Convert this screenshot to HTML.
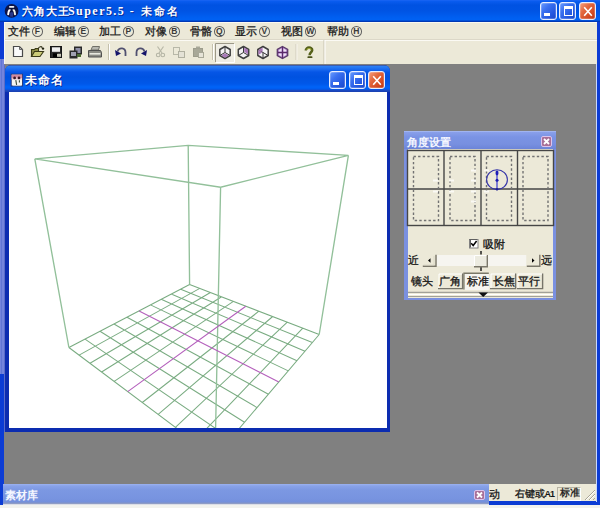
<!DOCTYPE html>
<html><head><meta charset="utf-8">
<style>
*{box-sizing:border-box;margin:0;padding:0}
html,body{width:600px;height:508px;overflow:hidden;background:#f2f2ee;font-family:"Liberation Sans",sans-serif;font-size:11px;color:#000}
.a{position:absolute}
.tb{border:1px solid #e8eeff;border-radius:3px;overflow:hidden;box-shadow:inset 0 0 0 0.5px rgba(255,255,255,.4)}
.mi{top:4px;line-height:12px;white-space:nowrap;font-size:10.6px;color:#1a1a1a;-webkit-text-stroke:0.3px #1a1a1a}
.mi u{text-decoration:none;display:inline-block;position:relative;width:11.5px;height:11px;border:1.2px solid #606060;border-left-width:1.5px;border-right-width:1.5px;border-radius:50%;margin-left:1.5px;vertical-align:1px;font-size:8.5px;line-height:8.5px;text-align:center;font-weight:bold;-webkit-text-stroke:0;color:#3a3a3a}
.pt{font-size:10.6px;line-height:12px;white-space:nowrap;color:#161616;-webkit-text-stroke:0.3px #161616}
.wt{color:#fff;font-weight:bold;white-space:nowrap}
</style></head><body>
<!-- main frame -->
<div class="a" style="left:0;top:0;width:600px;height:505px;background:#0c3cd4"></div>
<div class="a" style="left:0;top:59px;width:4px;height:315px;background:#7484dc"></div>
<div class="a" style="left:1px;top:59px;width:1px;height:315px;background:#6076d4"></div>
<div class="a" style="left:596px;top:22px;width:1px;height:480px;background:#c8d8ff"></div>
<!-- title -->
<div class="a" style="left:0;top:0;width:600px;height:22px;background:linear-gradient(#2068f4 0px,#0a5cf0 1px,#0052e2 5px,#0054e4 11px,#005ef0 17px,#0062f4 20px,#0040c0 21px,#0030a8 22px)"></div>
<svg class="a" style="left:0;top:0" width="22" height="22"><circle cx="11.6" cy="10.9" r="6.9" fill="#0c1448"/><path d="M10 13Q11.6 11 13.2 13L13 16.8H10.2Z" fill="#28388c"/><path d="M9.8 6.9H13.5" stroke="#f0f4f8" stroke-width="1.6" stroke-linecap="round"/><path d="M9.7 9.8Q8.2 11.4 8.2 14.2" stroke="#fff" stroke-width="2" stroke-linecap="round" fill="none"/><path d="M13.5 9.8Q15 11.4 15 14.2" stroke="#f4f4ec" stroke-width="2" stroke-linecap="round" fill="none"/><path d="M8.5 8.8H14.7" stroke="#080c30" stroke-width="1"/></svg>
<div class="a wt" style="left:21.5px;top:4px;font-size:10.8px;letter-spacing:1.25px;line-height:14px;text-shadow:1px 1px 0 #0a2c98">六角大王<span style="font-family:'Liberation Serif',serif;font-size:12px;letter-spacing:1.45px;margin-left:-2.5px">Super5.5 - </span><span style="margin-left:1.5px;letter-spacing:2.1px">未命名</span></div>
<div class="a tb" style="left:540px;top:2px;width:17px;height:18px;background:linear-gradient(135deg,#6a9cff 0%,#3a70f0 35%,#2458e0 70%,#1c48c8 100%)"><div class="a" style="left:3px;bottom:3px;width:6px;height:2.6px;background:#fff"></div></div><div class="a tb" style="left:559px;top:2px;width:17px;height:18px;background:linear-gradient(135deg,#6a9cff 0%,#3a70f0 35%,#2458e0 70%,#1c48c8 100%)"><div class="a" style="left:3.5px;top:3px;width:9.5px;height:9.5px;border:1px solid #fff;border-top:3px solid #fff"></div></div><div class="a tb" style="left:579px;top:2px;width:17px;height:18px;background:linear-gradient(135deg,#f4a080 0%,#e46a40 35%,#d44c24 70%,#b83818 100%)"><svg class="a" style="left:0;top:0" width="17" height="18"><path d="M4.2 4.2L11.8 12.8M11.8 4.2L4.2 12.8" stroke="#fff" stroke-width="1.6"/></svg></div>
<!-- menu -->
<div class="a" style="left:4px;top:22px;width:593px;height:18px;background:#ece9d8;border-top:1px solid #faf8f0"></div>
<div class="a" style="left:4px;top:39px;width:593px;height:1px;background:#dcd8c8"></div>
<div class="a mi" style="left:8px;top:25px">文件<u>F</u></div>
<div class="a mi" style="left:54px;top:25px">编辑<u>E</u></div>
<div class="a mi" style="left:99px;top:25px">加工<u>P</u></div>
<div class="a mi" style="left:145px;top:25px">对像<u>B</u></div>
<div class="a mi" style="left:190px;top:25px">骨骼<u>Q</u></div>
<div class="a mi" style="left:235px;top:25px">显示<u>V</u></div>
<div class="a mi" style="left:281px;top:25px">视图<u>W</u></div>
<div class="a mi" style="left:327px;top:25px">帮助<u>H</u></div>
<!-- toolbar -->
<div class="a" style="left:4px;top:40px;width:593px;height:24px;background:#ece9d8;border-top:1px solid #fbfaf4"></div>
<svg class="a" style="left:0;top:0" width="330" height="64" viewBox="0 0 330 64">
 <!-- new doc -->
 <path d="M13.5 46.5H19.5L22.5 49.5V56.5H13.5Z" fill="#fafafa" stroke="#4a4a4a" stroke-width="1.2"/>
 <path d="M19.5 46.5V49.5H22.5" fill="none" stroke="#6a6a6a" stroke-width="1"/>
 <!-- open folder -->
 <path d="M31.5 49.5H34.5L35.5 48.5H38.5V56.5H31.5Z" fill="#8c8c48" stroke="#3a3a18" stroke-width="1.1"/>
 <path d="M31.5 56.5L34.5 51.5H43.5L40 56.5Z" fill="#cccc78" stroke="#3a3a18" stroke-width="1.1"/>
 <path d="M38.5 48C39.5 46.3 41.5 46.3 42.3 47.6" fill="none" stroke="#303018" stroke-width="1.1"/>
 <circle cx="43" cy="48.6" r="1.2" fill="#202010"/>
 <!-- save -->
 <rect x="50.5" y="46.5" width="11" height="11" fill="#2a2a2a" stroke="#181818"/>
 <rect x="52" y="47.3" width="8" height="4.5" fill="#f0f0f0"/>
 <rect x="53" y="53.3" width="5" height="4" fill="#000"/>
 <rect x="57" y="53.8" width="4" height="3" fill="#c8c8b8"/>
 <!-- multi docs -->
 <rect x="74" y="46.5" width="8" height="8" fill="#2a2a2a"/>
 <rect x="75.5" y="48" width="5" height="5" fill="#9090a8"/>
 <rect x="69.5" y="50.5" width="8" height="8" fill="#2a2a2a"/>
 <rect x="71" y="52" width="5" height="4" fill="#a0a0b0"/>
 <rect x="77" y="54" width="4" height="3" fill="#4a6a30"/>
 <!-- printer -->
 <path d="M91 50L92.5 46.5H99.5L98.5 50Z" fill="#b8b8b0" stroke="#707068" stroke-width="1"/>
 <path d="M88.5 50.5H100.5L101.5 52.5V57H88.5Z" fill="#8a8a84" stroke="#505050" stroke-width="1"/>
 <rect x="89.5" y="53" width="11" height="1.6" fill="#e8e8e0"/>
 <!-- sep -->
 <rect x="108" y="44" width="1" height="16" fill="#c4c0ac"/><rect x="109" y="44" width="1" height="16" fill="#fff"/>
 <!-- undo -->
 <path d="M125.5 56V52.5C125.5 47.5 119 47 117.5 51.5" fill="none" stroke="#505070" stroke-width="1.8"/>
 <path d="M115 50L116 56L121 53.5Z" fill="#14146a"/>
 <!-- redo -->
 <path d="M136.5 56V52.5C136.5 47.5 143 47 144.5 51.5" fill="none" stroke="#505070" stroke-width="1.8"/>
 <path d="M147 50L146 56L141 53.5Z" fill="#14146a"/>
 <!-- cut (disabled) -->
 <path d="M157.5 46.5L162 53M163.5 46.5L159 53" stroke="#b8b8a8" stroke-width="1.2" fill="none"/>
 <circle cx="158.2" cy="55" r="1.8" fill="none" stroke="#b4b4a4" stroke-width="1.1"/>
 <circle cx="162.8" cy="55" r="1.8" fill="none" stroke="#b4b4a4" stroke-width="1.1"/>
 <!-- copy (disabled) -->
 <rect x="173.5" y="47.5" width="6" height="7" fill="none" stroke="#b8b8a8"/>
 <rect x="178.5" y="51.5" width="6" height="6" fill="#e4e2d6" stroke="#b0b0a0"/>
 <!-- paste (disabled) -->
 <rect x="193.5" y="48.5" width="9" height="8" fill="#a8a898" stroke="#9c9c8c"/>
 <rect x="196" y="46.5" width="4" height="2" fill="#a8a898"/>
 <rect x="198.5" y="52.5" width="5" height="5" fill="#e6e4d8" stroke="#a8a898"/>
 <!-- sep -->
 <rect x="212" y="44" width="1" height="16" fill="#c4c0ac"/><rect x="213" y="44" width="1" height="16" fill="#fff"/>
 <!-- pressed button -->
 <rect x="215.5" y="43.5" width="19" height="19" fill="#efede4" stroke="none"/>
 <path d="M215.5 62V43.5H234" fill="none" stroke="#9c9888" stroke-width="1"/>
 <path d="M216 62.5H234.5V44" fill="none" stroke="#ffffff" stroke-width="1"/>
 <!-- hexes -->
 <g stroke="#404040" stroke-width="1.5" fill="#f4f2f4" stroke-linejoin="round">
  <path d="M225 46.5L230.2 49.5V55.5L225 58.5L219.8 55.5V49.5Z"/>
  <path d="M243.5 46.5L248.7 49.5V55.5L243.5 58.5L238.3 55.5V49.5Z"/>
  <path d="M263 46.5L268.2 49.5V55.5L263 58.5L257.8 55.5V49.5Z"/>
 </g>
 <path d="M225 52.5V47M225 52.5L220.3 55.2M225 52.5L229.7 55.2" stroke="#383838" stroke-width="1"/>
 <path d="M221.3 55.4L225 53.3L228.7 55.4L225 57.8Z" fill="#a878b8"/>
 <path d="M243.5 52.5V47M243.5 52.5L238.8 55.2M243.5 52.5L248.2 55.2" stroke="#383838" stroke-width="1"/>
 <path d="M244.2 51.8V47.6L248 49.8V54.2Z" fill="#a878b8"/>
 <path d="M263 52.5L258.3 49.8M263 52.5L263 58M263 52.5L267.7 55.2" stroke="#383838" stroke-width="1"/>
 <path d="M262.6 51.8V47.4L258.4 49.9L258.4 50.4Z M258.4 50.6L262.3 52.6L258.4 54.8Z" fill="#a878b8"/>
 <path d="M282.5 46.5L287.7 49.5V55.5L282.5 58.5L277.3 55.5V49.5Z" fill="#b890d0" stroke="#5a3a6a" stroke-width="1.3"/>
 <path d="M282.5 47V58M277.8 52.5H287.2" stroke="#5a2a6a" stroke-width="1.3"/>
 <path d="M279 50L281.5 48.5V51.5H279Z M283.5 48.5L286 50V51.5H283.5Z M279 53.5H281.5V56.5L279 55Z M283.5 53.5H286V55L283.5 56.5Z" fill="#f0e4f4"/>
 <!-- sep -->
 <rect x="295.5" y="44" width="1" height="16" fill="#d0ccbc"/><rect x="296.5" y="44" width="1" height="16" fill="#f8f6ee"/>
 <!-- help -->
 <path d="M305.8 50.5C305.6 46.8 312.4 46.6 312.2 50.2C312 52.3 309.6 52.6 309.6 55.2" fill="none" stroke="#55601a" stroke-width="2.5"/>
 <path d="M307 50C307.2 48.2 310.8 48 311 50" fill="none" stroke="#a8b440" stroke-width="1.1"/>
 <path d="M308.3 57.2H311.6" stroke="#48521a" stroke-width="1.8" stroke-linecap="round"/>
 <!-- toolbar end -->
 <rect x="323.5" y="40" width="1" height="24" fill="#c8c4b0"/><rect x="324.5" y="40" width="1" height="24" fill="#fff"/>
</svg>

<div class="a" style="left:4px;top:22px;width:1px;height:42px;background:#f6f6f2"></div>
<!-- mdi -->
<div class="a" style="left:4px;top:64px;width:592px;height:420px;background:#808080"></div>
<div class="a" style="left:4px;top:65px;width:1px;height:367px;background:#5a6cc8"></div>
<!-- child -->
<div class="a" style="left:5px;top:65px;width:385px;height:367px;background:#0c2cb0;border-radius:6px 6px 0 0"></div>
<div class="a" style="left:5px;top:65px;width:385px;height:27px;border-radius:6px 6px 0 0;background:linear-gradient(#3a5cb0 0px,#3a5cb0 1px,#2a7ef4 1.5px,#1c6cf0 4px,#0656e6 7px,#0052e0 12px,#0058ea 19px,#0064f8 22px,#005cf0 24px,#1a48c0 25.5px,#1a40b0 27px)"></div>
<svg class="a" style="left:10px;top:73px" width="14" height="14"><rect x="1.2" y="1.2" width="11.3" height="11.8" fill="#f6f6f2" stroke="#203070" stroke-width="0.9"/><rect x="1.6" y="1.6" width="10.5" height="3.6" fill="#d48aa0"/><path d="M1.6 5.2Q6.8 3.2 12.1 5.2V6.4H1.6Z" fill="#e8c0cc"/><circle cx="4.6" cy="4.9" r="1.4" fill="#3a1626"/><circle cx="9" cy="4.9" r="1.4" fill="#3a1626"/><path d="M5.8 7.2L6.6 11.8M9.4 7.2V9.5" stroke="#384838" stroke-width="1.1"/><path d="M3 12.6H11" stroke="#c8d0d8" stroke-width="0.8"/></svg>
<div class="a wt" style="left:24.5px;top:73px;font-size:11.6px;letter-spacing:1.3px;line-height:14px;text-shadow:1px 1px 0 #0a2c98">未命名</div>
<div class="a tb" style="left:329px;top:71px;width:17px;height:18px;background:linear-gradient(135deg,#6a9cff 0%,#3a70f0 35%,#2458e0 70%,#1c48c8 100%)"><div class="a" style="left:3px;bottom:3px;width:6px;height:2.6px;background:#fff"></div></div><div class="a tb" style="left:349px;top:71px;width:17px;height:18px;background:linear-gradient(135deg,#6a9cff 0%,#3a70f0 35%,#2458e0 70%,#1c48c8 100%)"><div class="a" style="left:3.5px;top:3px;width:9.5px;height:9.5px;border:1px solid #fff;border-top:3px solid #fff"></div></div><div class="a tb" style="left:368px;top:71px;width:17px;height:18px;background:linear-gradient(135deg,#f4a080 0%,#e46a40 35%,#d44c24 70%,#b83818 100%)"><svg class="a" style="left:0;top:0" width="17" height="18"><path d="M4.2 4.2L11.8 12.8M11.8 4.2L4.2 12.8" stroke="#fff" stroke-width="1.6"/></svg></div>
<div class="a" style="left:9px;top:92px;width:378px;height:336px;background:#fff;overflow:hidden">
<svg class="a" style="left:0;top:0" width="378" height="336" viewBox="9 92 378 336">
 <g fill="none" stroke="#7aac82" stroke-width="1.05">
  <path d="M189.6 284.5L68.9 347.5M189.6 284.5L319.2 334.5M199.8 288.4L79.1 355.1M180.7 289.2L312.3 342.6M210.4 292.5L90.0 363.3M171.2 294.1L305.0 351.2M221.6 296.8L101.6 372.0M161.2 299.3L297.0 360.7M233.4 301.4L114.2 381.4M150.5 304.9L288.3 370.9M258.9 311.2L142.3 402.5M127.0 317.2L268.4 394.2M272.7 316.5L158.2 414.4M114.0 324.0L257.1 407.6M287.3 322.2L175.4 427.4M100.0 331.3L244.5 422.3M302.8 328.2L194.3 441.5M85.0 339.1L230.6 438.7M319.2 334.5L215.0 457.0M68.9 347.5L215.0 457.0"/>
  <path d="M34.8 158.9L188.2 145.4L348.4 155.4L220.6 187.2Z M34.8 158.9L68.9 347.5 M188.2 145.4L189.6 284.5 M348.4 155.4L319.2 334.5 M220.6 187.2L215.0 457.0" stroke="#92c09a" stroke-width="1.35"/>
 </g>
 <path fill="none" stroke="#b460bc" stroke-width="1.1" d="M245.8 306.2L127.7 391.6M139.1 310.9L278.8 382.0"/>
</svg>
</div>
<!-- floating panel -->
<div class="a" style="left:404px;top:131px;width:152px;height:169px;background:#7a90e0;border-top:1px solid #a0b4f0"></div>
<div class="a" style="left:404px;top:132px;width:152px;height:17px;background:linear-gradient(#8aa0ea,#7a93e4 5px,#7890e0 12px,#6c84d8 17px)"></div>
<div class="a wt" style="left:407px;top:136px;font-size:11px;line-height:12px;color:#f4f6ff">角度设置</div>
<div class="a" style="left:541px;top:136px;width:11px;height:11px;background:#a87098;border:1px solid #dcc4ec;border-radius:2px"></div>
<svg class="a" style="left:541px;top:136px" width="11" height="11"><path d="M3 3L8 8M8 3L3 8" stroke="#fff" stroke-width="1.8"/></svg>
<div class="a" style="left:408px;top:149px;width:145px;height:149px;background:#ece9d8"></div>
<svg class="a" style="left:404px;top:131px" width="152" height="169" viewBox="404 131 152 169">
 <!-- grid bg -->
 <rect x="407.5" y="150.5" width="146" height="75" fill="#ece9d8" stroke="#464646" stroke-width="1.4"/>
 <path d="M444 150.5V225.5M481 150.5V225.5M517.5 150.5V225.5M407.5 189H553.5" stroke="#464646" stroke-width="1.4"/>
 <g fill="none" stroke="#727272" stroke-width="1.4" stroke-dasharray="2.4 2.2">
  <rect x="413.5" y="156.5" width="25" height="64"/>
  <rect x="450" y="156.5" width="25" height="64"/>
  <rect x="486.5" y="156.5" width="25" height="64"/>
  <rect x="523" y="156.5" width="25" height="64"/>
 </g>
 <!-- faint marks -->
 <g fill="#faf9f4"><rect x="433.0" y="179.5" width="5" height="2"/><rect x="433.0" y="190.5" width="5" height="2"/><rect x="449.0" y="179.5" width="5" height="2"/><rect x="449.0" y="190.5" width="5" height="2"/><rect x="471.0" y="169.5" width="5" height="2"/><rect x="471.0" y="179.5" width="5" height="2"/><rect x="471.0" y="190.5" width="5" height="2"/><rect x="471.0" y="200.5" width="5" height="2"/><rect x="484.0" y="169.5" width="5" height="2"/><rect x="484.0" y="190.5" width="5" height="2"/></g>
 <!-- blue circle -->
 <ellipse cx="497" cy="179.7" rx="10.4" ry="9.9" fill="none" stroke="#3434a8" stroke-width="1.1"/>
 <path d="M497 171V189.5" stroke="#3a3ad0" stroke-width="1.2"/>
 <ellipse cx="497" cy="173" rx="1.5" ry="2.4" fill="#1c1cb8"/>
 <circle cx="497" cy="180.3" r="1.5" fill="#1c1cb0"/>
 <circle cx="497" cy="189.2" r="1.2" fill="#202090"/>
 <!-- checkbox -->
 <rect x="469.5" y="239.5" width="8.5" height="8.5" fill="#fff" stroke="#808080" stroke-width="1"/>
 <path d="M470.5 239.5V247.5M469.5 239.5H477" stroke="#606060" stroke-width="1"/>
 <path d="M471.2 243.3L473.2 245.5L476.6 241" fill="none" stroke="#000" stroke-width="1.5"/>
 <!-- slider ticks -->
 <path d="M481 251V254.5M481 266.5V271" stroke="#202020" stroke-width="1.5"/>
 <!-- track -->
 <rect x="436.5" y="255" width="90" height="11" fill="#f6f5f0"/>
 <!-- left button -->
 <rect x="422.5" y="254.5" width="14" height="12" fill="#ece9d8"/>
 <path d="M436 254.8V266.2H422.8" fill="none" stroke="#7a776a" stroke-width="1.4"/>
 <path d="M434 256V265H423.5" fill="none" stroke="#d8d4c4" stroke-width="0.8"/>
 <path d="M428 260.5L430.5 258.2V262.8Z" fill="#000"/>
 <!-- right button -->
 <rect x="526.5" y="254.5" width="13.5" height="12" fill="#ece9d8"/>
 <path d="M539.8 254.8V266.2H526.8" fill="none" stroke="#7a776a" stroke-width="1.4"/>
 <path d="M534.5 260.5L532 258.2V262.8Z" fill="#000"/>
 <!-- thumb -->
 <rect x="474" y="255" width="13.5" height="12" fill="#ecebe0"/>
 <path d="M487.3 255V266.8H474" fill="none" stroke="#7a776a" stroke-width="1.4"/>
 <path d="M474.5 266V255.5H486.5" fill="none" stroke="#ffffff" stroke-width="1"/>
 <!-- tab buttons -->
 <g fill="none" stroke-width="1.4">
  <path d="M462.6 273.5V288.6H438" stroke="#76746a"/>
  <path d="M439 288V274H462" stroke="#ffffff" stroke-width="1"/>
  <path d="M488.8 273.3H464V289.5" stroke="#7a7868"/>
  <path d="M515.6 273.5V288.6H490" stroke="#76746a"/>
  <path d="M491 288V274H515" stroke="#ffffff" stroke-width="1"/>
  <path d="M542.6 273.5V288.6H517" stroke="#76746a"/>
  <path d="M518 288V274H542" stroke="#ffffff" stroke-width="1"/>
 </g>
 <rect x="464.8" y="274" width="24" height="16" fill="#f6f5f0"/>
 <!-- bottom rules -->
 <path d="M408 292.3H553M408 296.5H553" stroke="#a0a098" stroke-width="1.2"/>
 <path d="M408 294.5H553" stroke="#ffffff" stroke-width="1"/>
 <path d="M478.5 292.5H488L483.2 297Z" fill="#101010"/>
</svg>

<div class="a pt" style="left:483px;top:238px">吸附</div>
<div class="a pt" style="left:408px;top:254px">近</div>
<div class="a pt" style="left:541px;top:254px">远</div>
<div class="a pt" style="left:411px;top:274.5px">镜头</div>
<div class="a pt" style="left:439px;top:274.5px">广角</div>
<div class="a pt" style="left:467px;top:274.5px">标准</div>
<div class="a pt" style="left:493px;top:274.5px">长焦</div>
<div class="a pt" style="left:518px;top:274.5px">平行</div>
<!-- status bar -->
<div class="a" style="left:489px;top:484px;width:107px;height:17px;background:#ece9d8"></div>
<div class="a pt" style="left:489px;top:487.5px;font-size:10.5px">动</div>
<div class="a pt" style="left:515px;top:487.5px;font-size:10.2px">右键或<span style="font-family:'Liberation Sans';font-weight:bold;font-size:9px;letter-spacing:-0.9px;-webkit-text-stroke:0;margin-left:-0.5px">A1</span></div>
<div class="a" style="left:557px;top:487px;width:24px;height:14px;border-top:1px solid #b8b4a4;border-left:1px solid #b8b4a4;border-bottom:1px solid #fff;border-right:1px solid #fff"></div>
<div class="a pt" style="left:559.5px;top:487px;font-size:10px">标准</div>
<svg class="a" style="left:583px;top:488px" width="13" height="13"><path d="M12 2L2 12M12 6L6 12M12 10L10 12" stroke="#a8a494" stroke-width="1"/><path d="M12 3L3 12M12 7L7 12" stroke="#fff" stroke-width="1"/></svg>
<!-- sucai bar -->
<div class="a" style="left:3px;top:484px;width:486px;height:20px;background:linear-gradient(#9cb2f0 0,#88a2e8 2px,#7c98e2 6px,#7894e0 14px,#7490dc 18px,#8494c4 19px,#98a4c8 20px)"></div>
<div class="a" style="left:3px;top:504px;width:486px;height:1px;background:#dcdee6"></div>
<div class="a wt" style="left:5px;top:489px;font-size:11px;line-height:12px;color:#f4f6ff">素材库</div>
<div class="a" style="left:474px;top:490px;width:11px;height:10px;background:#a87098;border:1px solid #dcc4ec;border-radius:2px"></div>
<svg class="a" style="left:474px;top:490px" width="11" height="10"><path d="M3 2.5L8 7.5M8 2.5L3 7.5" stroke="#fff" stroke-width="1.8"/></svg>
</body></html>
